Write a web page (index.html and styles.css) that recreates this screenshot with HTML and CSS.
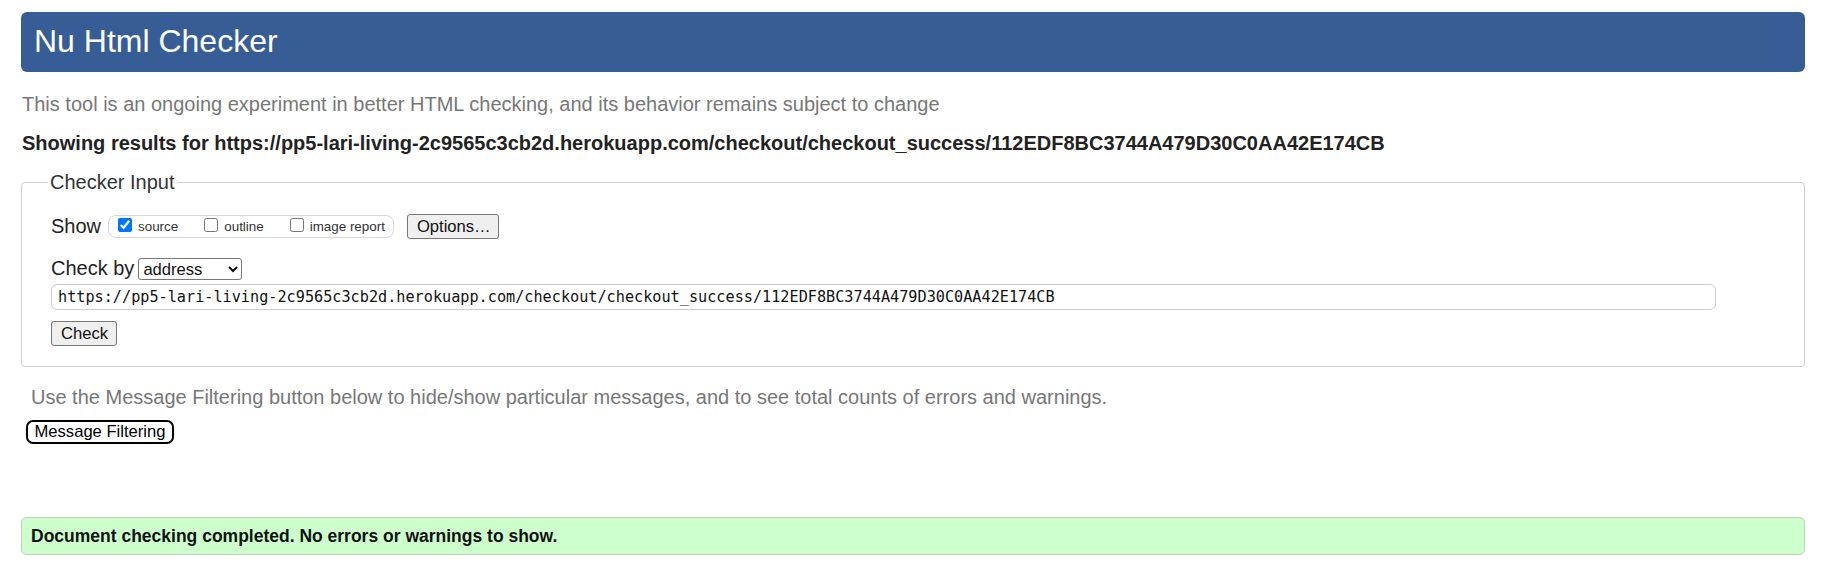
FILE: index.html
```html
<!DOCTYPE html>
<html lang="en">
<head>
<meta charset="utf-8">
<title>Nu Html Checker</title>
<link rel="stylesheet" href="styles.css">
</head>
<body>
<h1 class="banner">Nu Html Checker</h1>
<p class="intro">This tool is an ongoing experiment in better HTML checking, and its behavior remains subject to change</p>
<p class="results-for">Showing results for https://pp5-lari-living-2c9565c3cb2d.herokuapp.com/checkout/checkout_success/112EDF8BC3744A479D30C0AA42E174CB</p>
<fieldset class="checker">
  <legend class="checker-legend">Checker Input</legend>
  <div class="row row-show">
    <span class="row-label">Show</span>
    <span class="show-group">
      <label class="opt"><input type="checkbox" class="cb" checked>source</label>
      <label class="opt"><input type="checkbox" class="cb">outline</label>
      <label class="opt"><input type="checkbox" class="cb">image report</label>
    </span>
    <button class="btn btn-options" type="button">Options…</button>
  </div>
  <div class="row row-by">
    <span class="row-label">Check by</span>
    <select class="by-select"><option>address</option></select>
  </div>
  <input class="url-input" type="text" value="https://pp5-lari-living-2c9565c3cb2d.herokuapp.com/checkout/checkout_success/112EDF8BC3744A479D30C0AA42E174CB">
  <div class="row row-check">
    <button class="btn" type="button">Check</button>
  </div>
</fieldset>
<p class="filter-note">Use the Message Filtering button below to hide/show particular messages, and to see total counts of errors and warnings.</p>
<button class="btn-filter" type="button">Message Filtering</button>
<div class="success">Document checking completed. No errors or warnings to show.</div>
</body>
</html>
```
FILE: styles.css
```css
html, body {
  background: #ffffff;
}
body {
  margin: 12px 18px 0 21px;
  font-family: "Liberation Sans", Arial, sans-serif;
  font-size: 20px;
  color: #222;
}
.banner {
  margin: 0;
  height: 60px;
  box-sizing: border-box;
  padding: 11px 0 0 13px;
  background: #365d95;
  color: #ffffff;
  border-radius: 6px;
  font-size: 32px;
  font-weight: normal;
  line-height: 36px;
}
.intro {
  margin: 21px 0 0 1px;
  color: #777;
  line-height: 23px;
}
.results-for {
  margin: 16px 0 0 1px;
  font-weight: bold;
  color: #222;
  line-height: 23px;
}
.checker {
  margin: 15px 0 0 0;
  padding: 20px 20px 20px 29px;
  border: 1px solid #cfcfcf;
  border-radius: 4px;
}
.checker-legend {
  padding: 0 2px;
  margin-left: -3px;
  line-height: 24px;
  color: #333;
}
.row {
  display: flex;
  align-items: center;
}
.row-show {
  height: 25px;
}
.row-label {
  color: #222;
  line-height: 23px;
}
.show-group {
  display: flex;
  align-items: center;
  height: 23px;
  box-sizing: border-box;
  margin-left: 7px;
  padding: 0 8px 0 9px;
  border: 1px solid #d6d6d6;
  border-radius: 8px;
  font-size: 13.4px;
  color: #333;
}
.opt {
  display: flex;
  align-items: center;
  margin-right: 26px;
}
.opt:last-child {
  margin-right: 0;
}
.cb {
  width: 14px;
  height: 14px;
  margin: 0 6px 3px 0;
}
.btn {
  font-family: "Liberation Sans", Arial, sans-serif;
  font-size: 16.6px;
  height: 25px;
  padding: 0 9px;
  background: #efefef;
  color: #111;
  border: 1px solid #767676;
  border-radius: 3px;
}
.btn-options {
  margin-left: 13px;
  width: 92px;
}
.row-by {
  margin-top: 18px;
  height: 23px;
}
.by-select {
  margin-left: 4px;
  width: 104px;
  height: 22px;
  font-family: "Liberation Sans", Arial, sans-serif;
  font-size: 16.6px;
  border: 1px solid #767676;
  border-radius: 3px;
  background: #fff;
  color: #111;
}
.url-input {
  display: block;
  margin-top: 4px;
  width: 1665px;
  height: 26px;
  box-sizing: border-box;
  padding: 0 6px;
  border: 1px solid #cccccc;
  border-radius: 6px;
  font-family: "DejaVu Sans Mono", "Liberation Mono", monospace;
  font-size: 15.2px;
  color: #111;
}
.row-check {
  margin-top: 11px;
}
.row-check .btn {
  width: 66px;
}
.filter-note {
  margin: 19px 0 0 10px;
  color: #777;
  line-height: 23px;
}
.btn-filter {
  display: block;
  margin: 11px 0 0 5px;
  height: 24px;
  width: 148px;
  padding: 0;
  font-family: "Liberation Sans", Arial, sans-serif;
  font-size: 16.6px;
  background: #ffffff;
  color: #000;
  border: 2px solid #000;
  border-radius: 7px;
}
.success {
  margin-top: 73px;
  height: 38px;
  box-sizing: border-box;
  display: flex;
  align-items: center;
  padding-left: 9px;
  background: #ccffcc;
  border: 1px solid #bfcfbf;
  border-radius: 5px;
  font-weight: bold;
  font-size: 17.5px;
  color: #111;
}
```
